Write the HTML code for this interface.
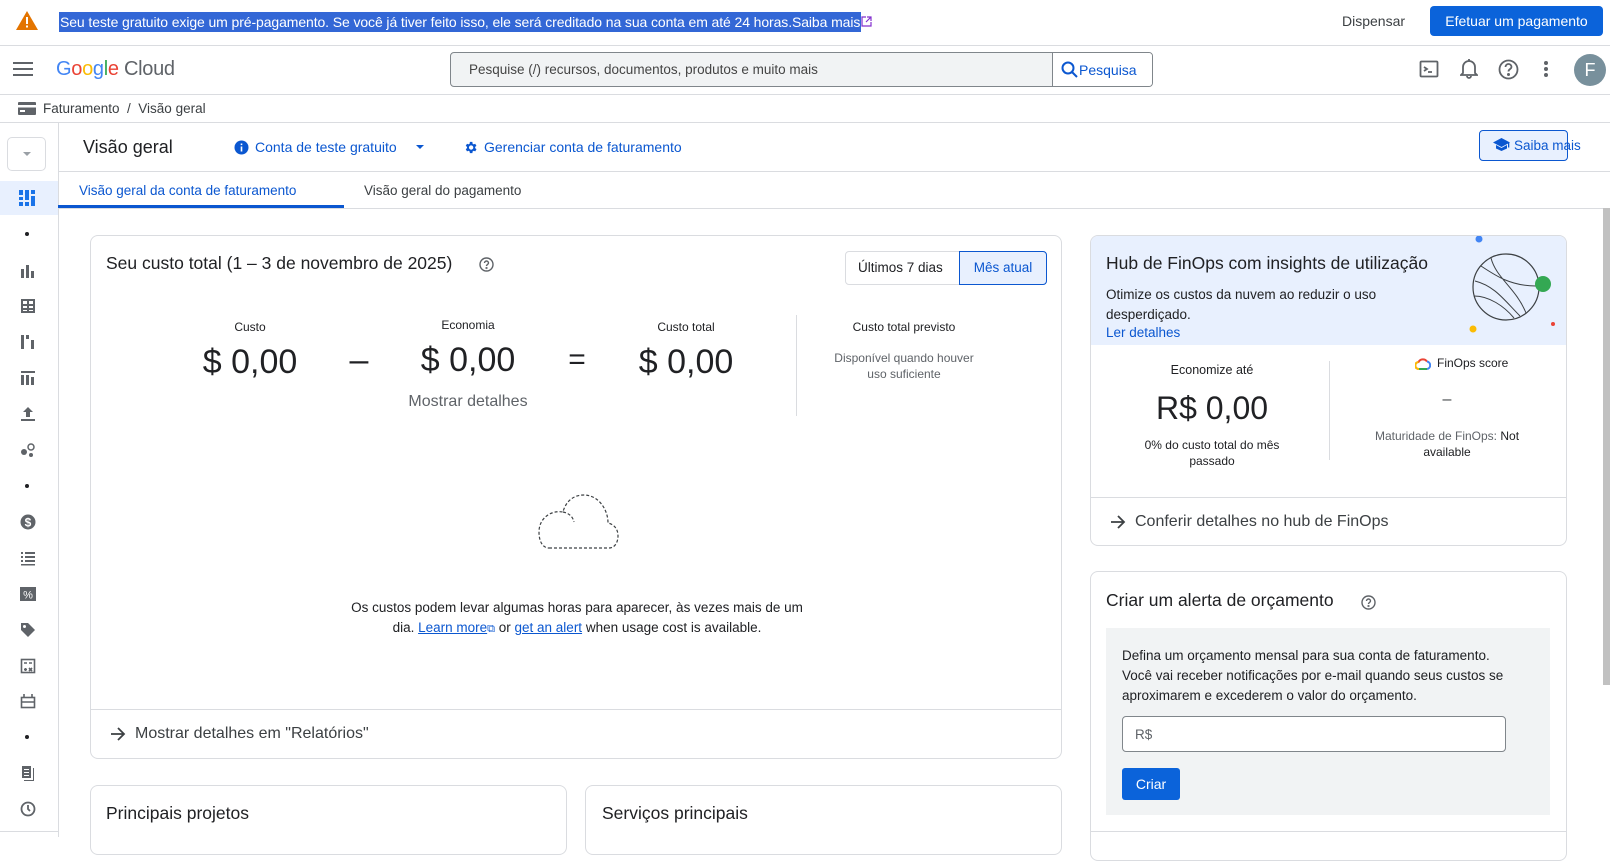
<!DOCTYPE html>
<html><head><meta charset="utf-8"><style>
*{box-sizing:border-box;margin:0;padding:0}
body{width:1610px;height:837px;overflow:hidden;background:#fff;font-family:"Liberation Sans",Arial,sans-serif;color:#202124;position:relative}
.a{position:absolute;white-space:nowrap}
.c{transform:translateX(-50%);text-align:center}
.hl{border-top:1px solid #dadce0;position:absolute;left:0;right:0}
.blue{color:#0b57d0}
.card{position:absolute;border:1px solid #dadce0;border-radius:8px;background:#fff;overflow:hidden}
.ic{position:absolute;left:19px;width:16px;height:16px}
</style></head><body>
<!-- banner -->
<svg class="a" style="left:16px;top:11px" width="22" height="19" viewBox="0 0 22 19"><path d="M11 0L22 19H0Z" fill="#e37400"/><rect x="10" y="6" width="2" height="7" fill="#fff"/><rect x="10" y="14.5" width="2" height="2" fill="#fff"/></svg>
<div class="a" style="left:59px;top:12px;height:20px;line-height:20px;font-size:14px;background:#3367d6;color:#fff;padding:0 1px;letter-spacing:-0.1px">Seu teste gratuito exige um pré-pagamento. Se você já tiver feito isso, ele será creditado na sua conta em até 24 horas.Saiba mais</div>
<svg class="a" style="left:861px;top:16px" width="11" height="11" viewBox="0 0 11 11" fill="none" stroke="#8430ce" stroke-width="1.2"><path d="M5 1H1v9h9V6M6 1h4v4M10 1L5 6"/></svg>
<div class="a" style="left:1342px;top:13px;font-size:14px;color:#3c4043">Dispensar</div>
<div class="a" style="left:1430px;top:6px;width:173px;height:30px;background:#0b63da;border-radius:4px;color:#fff;font-size:14px;line-height:30px;text-align:center">Efetuar um pagamento</div>
<div class="hl" style="top:45px"></div>
<!-- header -->
<svg class="a" style="left:13px;top:62px" width="20" height="14" viewBox="0 0 20 14" fill="#5f6368"><rect y="0" width="20" height="2"/><rect y="6" width="20" height="2"/><rect y="12" width="20" height="2"/></svg>
<div class="a" style="left:56px;top:58px;font-size:20px;letter-spacing:-0.3px"><span style="color:#4285f4">G</span><span style="color:#ea4335">o</span><span style="color:#fbbc04">o</span><span style="color:#4285f4">g</span><span style="color:#34a853">l</span><span style="color:#ea4335">e</span> <span style="color:#5f6368">Cloud</span></div>
<div class="a" style="left:450px;top:52px;width:703px;height:35px;border:1px solid #80868b;border-radius:4px;background:#f1f3f4;overflow:hidden">
<div class="a" style="left:18px;top:9px;font-size:13.5px;color:#444">Pesquise (/) recursos, documentos, produtos e muito mais</div>
<div class="a" style="left:601px;top:0;width:101px;height:33px;background:#fff;border-left:1px solid #80868b"></div>
<svg class="a" style="left:610px;top:8px" width="17" height="17" viewBox="0 0 17 17" fill="none" stroke="#0b57d0" stroke-width="2"><circle cx="7" cy="7" r="5.5"/><path d="M11 11l5 5"/></svg>
<div class="a blue" style="left:628px;top:9px;font-size:14px">Pesquisa</div></div>
<svg class="a" style="left:1419px;top:59px" width="20" height="20" viewBox="0 0 20 20" fill="none" stroke="#5f6368" stroke-width="1.8"><rect x="1.5" y="2.5" width="17" height="15" rx="1"/><path d="M5 8l3 2-3 2M9 13h4"/></svg>
<svg class="a" style="left:1460px;top:58px" width="18" height="21" viewBox="0 0 18 21" fill="none" stroke="#5f6368" stroke-width="1.8"><path d="M3 15V9a6 6 0 0112 0v6l2 2H1zM7 18a2 2 0 004 0M9 1v2"/></svg>
<svg class="a" style="left:1498px;top:59px" width="21" height="21" viewBox="0 0 21 21" fill="none" stroke="#5f6368" stroke-width="1.8"><circle cx="10.5" cy="10.5" r="9"/><path d="M7.5 8a3 3 0 116 0c0 2-3 2-3 4.5"/><circle cx="10.5" cy="15.5" r=".6" fill="#5f6368"/></svg>
<svg class="a" style="left:1544px;top:61px" width="4" height="16" viewBox="0 0 4 16" fill="#5f6368"><circle cx="2" cy="2" r="2"/><circle cx="2" cy="8" r="2"/><circle cx="2" cy="14" r="2"/></svg>
<div class="a" style="left:1574px;top:54px;width:32px;height:32px;border-radius:50%;background:#78909c;color:#fff;font-size:18px;line-height:32px;text-align:center">F</div>
<div class="hl" style="top:94px"></div>
<!-- breadcrumb -->
<svg class="a" style="left:18px;top:102px" width="18" height="13" viewBox="0 0 18 13"><rect width="18" height="13" rx="1" fill="#5f6368"/><rect x="0" y="3" width="18" height="2.5" fill="#fff"/><rect x="2" y="8" width="5" height="2" fill="#fff"/></svg>
<div class="a" style="left:43px;top:101px;font-size:13.5px;color:#3c4043">Faturamento &nbsp;/ &nbsp;Visão geral</div>
<div class="hl" style="top:122px"></div>
<!-- rail -->
<div class="a" style="left:58px;top:123px;height:714px;border-left:1px solid #dadce0"></div>
<div class="a" style="left:7px;top:137px;width:39px;height:34px;border:1px solid #dadce0;border-radius:5px"></div>
<div class="a" style="left:23px;top:152px;border:4px solid transparent;border-top:4px solid #9aa0a6;border-bottom:0"></div>
<div class="a" style="left:0;top:181px;width:58px;height:34px;background:#e8f0fe"></div>
<svg class="a" style="left:19px;top:190px" width="16" height="16" viewBox="0 0 16 16" fill="#1a73e8"><rect x="0" y="0" width="4" height="5"/><rect x="0" y="7" width="4" height="3"/><rect x="0" y="12" width="4" height="4"/><rect x="6" y="0" width="4" height="10"/><rect x="6" y="12" width="4" height="4"/><rect x="12" y="0" width="4" height="4"/><rect x="12" y="6" width="4" height="10"/></svg>
<div class="a" style="left:25px;top:232px;width:4px;height:4px;border-radius:50%;background:#202124"></div>
<svg class="ic" style="top:263px;left:20px" viewBox="0 0 16 16" fill="#5f6368"><rect x="1" y="6" width="3" height="9"/><rect x="6" y="2" width="3" height="13"/><rect x="11" y="8" width="3" height="7"/></svg>
<svg class="ic" style="top:298px;left:20px" viewBox="0 0 16 16" fill="#5f6368"><path d="M1 1h14v14H1zM3 3v3h4V3zm6 0v3h4V3zM3 8v2h4V8zm6 0v2h4V8zM3 12v1h4v-1zm6 0v1h4v-1z"/></svg>
<svg class="ic" style="top:334px;left:20px" viewBox="0 0 16 16" fill="#5f6368"><rect x="1" y="1" width="3" height="14"/><rect x="6" y="1" width="3" height="4"/><rect x="11" y="6" width="3" height="9"/></svg>
<svg class="ic" style="top:370px;left:20px" viewBox="0 0 16 16" fill="#5f6368"><rect x="1" y="1" width="14" height="2"/><rect x="1" y="5" width="3" height="10"/><rect x="6" y="5" width="3" height="10"/><rect x="11" y="7" width="3" height="8"/></svg>
<svg class="ic" style="top:406px;left:20px" viewBox="0 0 16 16" fill="#5f6368"><path d="M8 1l5 5H10v5H6V6H3zM1 13h14v2H1z"/></svg>
<svg class="ic" style="top:442px;left:20px" viewBox="0 0 16 16" fill="#5f6368"><circle cx="4" cy="10" r="3"/><circle cx="11" cy="5" r="3" fill="none" stroke="#5f6368" stroke-width="1.5"/><circle cx="11" cy="13" r="2"/></svg>
<div class="a" style="left:25px;top:484px;width:4px;height:4px;border-radius:50%;background:#202124"></div>
<svg class="ic" style="top:514px;left:20px" viewBox="0 0 16 16"><circle cx="8" cy="8" r="7.5" fill="#5f6368"/><text x="8" y="12.5" font-size="12" fill="#fff" text-anchor="middle" font-family="Liberation Sans" font-weight="bold">$</text></svg>
<svg class="ic" style="top:550px;left:20px" viewBox="0 0 16 16" fill="#5f6368"><rect x="1" y="2" width="2" height="2"/><rect x="5" y="2" width="10" height="2"/><rect x="1" y="6" width="2" height="2"/><rect x="5" y="6" width="10" height="2"/><rect x="1" y="10" width="2" height="2"/><rect x="5" y="10" width="10" height="2"/><rect x="1" y="14" width="14" height="1.5"/></svg>
<svg class="ic" style="top:586px;left:20px" viewBox="0 0 16 16"><rect x="0" y="1" width="16" height="14" fill="#5f6368"/><text x="8" y="12.5" font-size="11" fill="#fff" text-anchor="middle" font-family="Liberation Sans">%</text></svg>
<svg class="ic" style="top:622px;left:20px" viewBox="0 0 16 16" fill="#5f6368"><path d="M1 1h7l7 7-7 7-7-7z"/><circle cx="4.5" cy="4.5" r="1.5" fill="#fff"/></svg>
<svg class="ic" style="top:658px;left:20px" viewBox="0 0 16 16" fill="none" stroke="#5f6368" stroke-width="1.6"><rect x="1.5" y="1.5" width="13" height="13"/><path d="M4 5h3M9 5h3M5.5 10v3M4 11.5h3M9 10l3 3M12 10l-3 3"/></svg>
<svg class="ic" style="top:693px;left:20px" viewBox="0 0 16 16" fill="none" stroke="#5f6368" stroke-width="1.6"><rect x="1.5" y="4.5" width="13" height="10"/><path d="M1.5 9h13M4 4V1M12 4V1"/></svg>
<div class="a" style="left:25px;top:735px;width:4px;height:4px;border-radius:50%;background:#202124"></div>
<svg class="ic" style="top:765px;left:20px" viewBox="0 0 16 16" fill="#5f6368"><path d="M2 1h9v12H2z"/><path d="M13 3h1v13H4v-1h9z"/><rect x="4" y="4" width="5" height="1" fill="#fff"/><rect x="4" y="7" width="5" height="1" fill="#fff"/><rect x="4" y="10" width="5" height="1" fill="#fff"/></svg>
<svg class="ic" style="top:801px;left:20px" viewBox="0 0 16 16" fill="none" stroke="#5f6368" stroke-width="1.8"><circle cx="8" cy="8" r="6.5"/><path d="M8 4v4l2 2"/></svg>
<div class="a" style="left:0;top:831px;width:58px;border-top:1px solid #dadce0"></div>
<!-- title row -->
<div class="a" style="left:83px;top:137px;font-size:18px">Visão geral</div>
<svg class="a" style="left:234px;top:140px" width="15" height="15" viewBox="0 0 15 15"><circle cx="7.5" cy="7.5" r="7" fill="#0b57d0"/><rect x="6.7" y="6.5" width="1.6" height="5" fill="#fff"/><rect x="6.7" y="3.5" width="1.6" height="1.6" fill="#fff"/></svg>
<div class="a blue" style="left:255px;top:139px;font-size:14px">Conta de teste gratuito</div>
<div class="a" style="left:416px;top:145px;border:4px solid transparent;border-top:4px solid #0b57d0;border-bottom:0"></div>
<svg class="a" style="left:463px;top:140px" width="15" height="15" viewBox="0 0 24 24" fill="#0b57d0"><path d="M19.4 13a7.5 7.5 0 000-2l2.1-1.6-2-3.5-2.5 1a7.6 7.6 0 00-1.7-1L15 3h-4l-.4 2.9a7.6 7.6 0 00-1.7 1l-2.5-1-2 3.5L6.5 11a7.5 7.5 0 000 2l-2.1 1.6 2 3.5 2.5-1c.5.4 1.1.7 1.7 1L11 21h4l.4-2.9c.6-.3 1.2-.6 1.7-1l2.5 1 2-3.5zM13 15.5a3.5 3.5 0 110-7 3.5 3.5 0 010 7z"/></svg>
<div class="a blue" style="left:484px;top:139px;font-size:14px">Gerenciar conta de faturamento</div>
<div class="a" style="left:1479px;top:130px;width:89px;height:31px;border:1px solid #0b57d0;border-radius:4px;background:#e8f0fe"></div>
<svg class="a" style="left:1493px;top:138px" width="17" height="14" viewBox="0 0 17 14" fill="#0b57d0"><path d="M8.5 0L17 4.5 8.5 9 0 4.5z"/><path d="M3 7v3.5L8.5 13 14 10.5V7L8.5 10z"/><rect x="15" y="4.5" width="1.3" height="5"/></svg>
<div class="a blue" style="left:1514px;top:138px;font-size:13.5px">Saiba mais</div>
<div class="hl" style="top:171px;left:58px"></div>
<!-- tabs -->
<div class="a blue" style="left:79px;top:183px;font-size:13.5px">Visão geral da conta de faturamento</div>
<div class="a" style="left:364px;top:183px;font-size:13.5px;color:#3c4043">Visão geral do pagamento</div>
<div class="a" style="left:58px;top:205px;width:286px;height:3px;background:#0b57d0"></div>
<div class="hl" style="top:208px;left:58px"></div>
<!-- scrollbar -->
<div class="a" style="left:1603px;top:208px;width:7px;height:477px;background:#c1c1c1"></div>
<!-- main card -->
<div class="card" style="left:90px;top:235px;width:972px;height:524px">
<div class="a" style="left:15px;top:17px;font-size:17.5px">Seu custo total (1 – 3 de novembro de 2025)</div>
<svg class="a" style="left:388px;top:21px" width="15" height="15" viewBox="0 0 15 15" fill="none" stroke="#5f6368" stroke-width="1.4"><circle cx="7.5" cy="7.5" r="6.5"/><path d="M5.5 6a2 2 0 114 0c0 1.4-2 1.4-2 3"/><circle cx="7.5" cy="11" r=".4"/></svg>
<div class="a" style="left:754px;top:15px;width:202px;height:34px;border:1px solid #dadce0;border-radius:4px"></div>
<div class="a" style="left:767px;top:24px;font-size:13.5px">Últimos 7 dias</div>
<div class="a" style="left:868px;top:15px;width:88px;height:34px;border:1px solid #0b57d0;border-radius:0 4px 4px 0;background:#e8f0fe;color:#0b57d0;font-size:13.5px;line-height:32px;text-align:center">Mês atual</div>
<div class="a c" style="left:159px;top:84px;font-size:12px">Custo</div>
<div class="a c" style="left:159px;top:107px;font-size:34px">$ 0,00</div>
<div class="a c" style="left:268px;top:105px;font-size:34px">–</div>
<div class="a c" style="left:377px;top:82px;font-size:12px">Economia</div>
<div class="a c" style="left:377px;top:105px;font-size:34px">$ 0,00</div>
<div class="a c" style="left:486px;top:107px;font-size:30px">=</div>
<div class="a c" style="left:595px;top:84px;font-size:12px">Custo total</div>
<div class="a c" style="left:595px;top:107px;font-size:34px">$ 0,00</div>
<div class="a c" style="left:377px;top:157px;font-size:16px;color:#5f6368">Mostrar detalhes</div>
<div class="a" style="left:705px;top:79px;height:101px;border-left:1px solid #dadce0"></div>
<div class="a c" style="left:813px;top:84px;font-size:12px">Custo total previsto</div>
<div class="a c" style="left:813px;top:114px;font-size:12px;color:#5f6368;line-height:16px">Disponível quando houver<br>uso suficiente</div>
<svg class="a" style="left:446px;top:258px" width="82" height="56" viewBox="0 0 82 56" fill="none" stroke="#3c4043" stroke-width="1.2" stroke-dasharray="3 2"><path d="M12 54h60c6 0 9-6 9-12 0-8-5-12-10-13 0-14-10-28-24-28C34 1 28 10 26 18 14 16 2 24 2 38c0 10 4 16 10 16z"/><path d="M26 18c6 1 10 5 11 10"/></svg>
<div class="a c" style="left:486px;top:362px;font-size:13.5px;line-height:20px">Os custos podem levar algumas horas para aparecer, às vezes mais de um<br>dia. <span style="color:#0b57d0;text-decoration:underline">Learn more</span><span style="color:#0b57d0;font-size:11px">⧉</span> or <span style="color:#0b57d0;text-decoration:underline">get an alert</span> when usage cost is available.</div>
<div class="a" style="left:0;right:0;top:473px;border-top:1px solid #dadce0"></div>
<svg class="a" style="left:19px;top:490px" width="16" height="16" viewBox="0 0 16 16" fill="none" stroke="#3c4043" stroke-width="1.8"><path d="M1 8h13M8 2l6 6-6 6"/></svg>
<div class="a" style="left:44px;top:489px;font-size:16px;color:#3c4043">Mostrar detalhes em "Relatórios"</div>
</div>
<!-- bottom cards -->
<div class="card" style="left:90px;top:785px;width:477px;height:70px"><div class="a" style="left:15px;top:17px;font-size:17.5px">Principais projetos</div></div>
<div class="card" style="left:585px;top:785px;width:477px;height:70px"><div class="a" style="left:16px;top:17px;font-size:17.5px">Serviços principais</div></div>
<!-- finops card -->
<div class="card" style="left:1090px;top:235px;width:477px;height:311px">
<div class="a" style="left:0;top:0;width:477px;height:109px;background:#e8f0fe"></div>
<div class="a" style="left:15px;top:17px;font-size:17.5px">Hub de FinOps com insights de utilização</div>
<div class="a" style="left:15px;top:49px;font-size:13.5px;line-height:20px">Otimize os custos da nuvem ao reduzir o uso<br>desperdiçado.</div>
<div class="a blue" style="left:15px;top:89px;font-size:13.5px">Ler detalhes</div>
<svg class="a" style="left:360px;top:0" width="117" height="109" viewBox="0 0 117 109" fill="none"><circle cx="28" cy="3" r="3.5" fill="#4285f4"/><circle cx="22" cy="93" r="3.5" fill="#fbbc04"/><circle cx="102" cy="88" r="2" fill="#ea4335"/><circle cx="55" cy="51" r="33" stroke="#3c4043" stroke-width="1.2"/><path d="M30 30c15 10 30 20 55 20M24 45c20 5 30 20 45 35M40 22c5 20 25 30 35 55M23 60c15 0 30 10 40 22" stroke="#3c4043" stroke-width="1"/><circle cx="92" cy="48" r="8" fill="#34a853"/></svg>
<div class="a c" style="left:121px;top:127px;font-size:12.5px">Economize até</div>
<div class="a c" style="left:121px;top:154px;font-size:32px">R$ 0,00</div>
<div class="a c" style="left:121px;top:201px;font-size:12px;line-height:16px">0% do custo total do mês<br>passado</div>
<div class="a" style="left:238px;top:125px;height:99px;border-left:1px solid #dadce0"></div>
<svg class="a" style="left:324px;top:122px" width="16" height="12" viewBox="0 0 16 12"><path d="M4 11a3.5 3.5 0 01-.5-7A5 5 0 0112 3.5" stroke="#ea4335" stroke-width="2" fill="none"/><path d="M12 3.5A3.8 3.8 0 0112 11" stroke="#4285f4" stroke-width="2" fill="none"/><path d="M4 11h8" stroke="#34a853" stroke-width="2"/><path d="M3.5 4A3.5 3.5 0 004 11" stroke="#fbbc04" stroke-width="2" fill="none"/></svg>
<div class="a" style="left:346px;top:120px;font-size:12px">FinOps score</div>
<div class="a c" style="left:356px;top:155px;font-size:16px;color:#3c4043">–</div>
<div class="a c" style="left:356px;top:192px;font-size:12px;line-height:16px;color:#5f6368">Maturidade de FinOps: <span style="color:#202124">Not</span><br><span style="color:#202124">available</span></div>
<div class="a" style="left:0;right:0;top:261px;border-top:1px solid #dadce0"></div>
<svg class="a" style="left:19px;top:278px" width="16" height="16" viewBox="0 0 16 16" fill="none" stroke="#3c4043" stroke-width="1.8"><path d="M1 8h13M8 2l6 6-6 6"/></svg>
<div class="a" style="left:44px;top:277px;font-size:16px;color:#3c4043">Conferir detalhes no hub de FinOps</div>
</div>
<!-- budget card -->
<div class="card" style="left:1090px;top:571px;width:477px;height:290px">
<div class="a" style="left:15px;top:18px;font-size:17.5px">Criar um alerta de orçamento</div>
<svg class="a" style="left:270px;top:23px" width="15" height="15" viewBox="0 0 15 15" fill="none" stroke="#5f6368" stroke-width="1.4"><circle cx="7.5" cy="7.5" r="6.5"/><path d="M5.5 6a2 2 0 114 0c0 1.4-2 1.4-2 3"/><circle cx="7.5" cy="11" r=".4"/></svg>
<div class="a" style="left:15px;top:56px;width:444px;height:187px;background:#f1f3f4"></div>
<div class="a" style="left:31px;top:74px;font-size:13.5px;line-height:20px;color:#202124">Defina um orçamento mensal para sua conta de faturamento.<br>Você vai receber notificações por e-mail quando seus custos se<br>aproximarem e excederem o valor do orçamento.</div>
<div class="a" style="left:31px;top:144px;width:384px;height:36px;border:1px solid #80868b;border-radius:4px;background:#fff"></div>
<div class="a" style="left:44px;top:155px;font-size:13.5px;color:#5f6368">R$</div>
<div class="a" style="left:31px;top:196px;width:58px;height:32px;background:#0b63da;border-radius:3px;color:#fff;font-size:14px;line-height:32px;text-align:center">Criar</div>
<div class="a" style="left:0;right:0;top:259px;border-top:1px solid #dadce0"></div>
</div>
</body></html>
